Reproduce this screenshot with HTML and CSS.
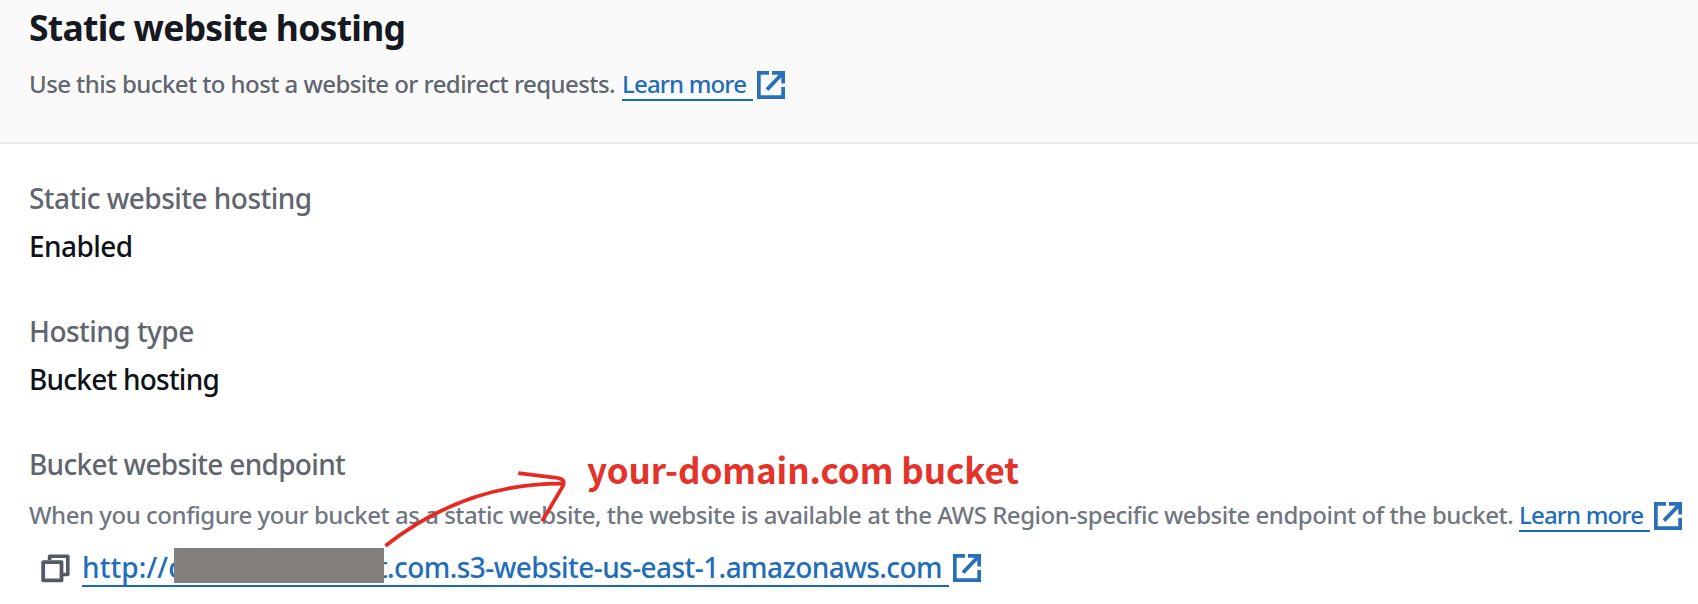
FILE: index.html
```html
<!DOCTYPE html>
<html lang="en">
<head>
<meta charset="utf-8">
<title>Static website hosting</title>
<link rel="stylesheet" href="styles.css">
</head>
<body>
<svg class="defs" aria-hidden="true">
  <symbol id="external" viewBox="0 0 28 28">
    <path d="M12 1.8H1.8v24.4h24.4V16M15 1.8h11.2V12.6M25.2 2.8 10 18.6" fill="none" stroke="currentColor" stroke-width="3.8"/>
  </symbol>
  <symbol id="copy" viewBox="0 0 29 29">
    <path d="M8.6 6V2.3h18.2v18.2H22" fill="none" stroke="currentColor" stroke-width="3.6" stroke-linejoin="round"/>
    <rect x="2.2" y="8.1" width="18.3" height="18.3" fill="#fff" stroke="currentColor" stroke-width="3.8" stroke-linejoin="round"/>
  </symbol>
</svg>
<header class="panel-header">
  <h2 class="title">Static website hosting</h2>
  <p class="hint"><span class="hint-text">Use this bucket to host a website or redirect requests.</span><a class="link">Learn more</a><svg class="icon"><use href="#external"/></svg></p>
</header>
<main class="panel-body">
  <section class="field">
    <div class="label">Static website hosting</div>
    <div class="value enabled">Enabled</div>
  </section>
  <section class="field">
    <div class="label">Hosting type</div>
    <div class="value">Bucket hosting</div>
  </section>
  <section class="field">
    <div class="label endpoint-label">Bucket website endpoint</div>
    <p class="hint endpoint-hint"><span class="hint-text">When you configure your bucket as a static website, the website is available at the AWS Region-specific website endpoint of the bucket.</span><a class="link">Learn more</a><svg class="icon"><use href="#external"/></svg></p>
    <div class="endpoint">
      <svg class="copy"><use href="#copy"/></svg>
      <a class="link url"><span class="url-start">http://c</span><span class="redaction"></span><span class="url-end"><span class="url-tail">t.com.s3-website-us-east-1.amazonaws.com</span></span></a>
      <svg class="icon"><use href="#external"/></svg>
    </div>
  </section>
</main>
<svg class="arrow" viewBox="0 0 190 84">
  <path d="M5.5 80.8C60 38 120 18 183 18.6M138.3 8.2 177 12.8Q186 14 183 21L162 56.3"/>
</svg>
<div class="note">your-domain.com bucket</div>
</body>
</html>
```
FILE: styles.css
```css
* { box-sizing: border-box; }
body {
  margin: 0;
  height: 604px;
  position: relative;
  overflow: hidden;
  background: #fff;
  font-family: "Noto Sans", sans-serif;
  white-space: nowrap;
}
.defs { display: none; }
.panel-header {
  height: 144px;
  padding: 5px 0 0 29px;
  background: #fafafa;
  border-bottom: 2px solid #ececed;
}
.title {
  margin: 0 0 15px;
  font-size: 35.5px;
  line-height: 44px;
  font-weight: 700;
  letter-spacing: -0.75px;
  color: #16191f;
}
.hint {
  display: flex;
  align-items: flex-start;
  margin: 0;
  height: 40px;
  font-size: 24px;
  line-height: 40px;
  font-weight: 500;
  letter-spacing: -0.57px;
  color: #5f666e;
}
.hint-text { width: 593px; flex: none; }
.link {
  flex: none;
  color: #216db9;
  border-bottom: 2px solid #1a69b9;
}
.hint .link {
  width: 131px;
  height: 37px;
  letter-spacing: -0.85px;
}
.icon {
  flex: none;
  width: 28px;
  height: 28px;
  margin: 7px 0 0 4px;
  color: #2a70b9;
}
.panel-body { padding: 30px 0 0 29px; }
.field { height: 133px; }
.label, .value {
  height: 48px;
  font-size: 28px;
  line-height: 49px;
  font-weight: 500;
  letter-spacing: -0.53px;
}
.label { color: #5f666e; }
.value { color: #0f1216; letter-spacing: -0.77px; }
.enabled { letter-spacing: -0.55px; }
.endpoint-label { letter-spacing: -0.69px; margin-bottom: 7px; }
.endpoint-hint { color: #70777f; letter-spacing: -0.473px; }
.endpoint-hint .hint-text { width: 1490px; }
.endpoint-hint .icon { margin-left: 3.5px; }
.endpoint {
  display: flex;
  margin-top: 8px;
  padding-left: 12px;
}
.copy {
  width: 29px;
  height: 29px;
  margin-top: 11px;
  color: #545b64;
}
.url {
  display: flex;
  width: 867px;
  height: 44px;
  margin-left: 12px;
  font-size: 28px;
  line-height: 49px;
  font-weight: 500;
  letter-spacing: -0.57px;
}
.url-start { width: 92px; letter-spacing: 0.1px; }
.redaction {
  position: relative;
  z-index: 1;
  flex: none;
  width: 210px;
  height: 35px;
  margin-top: 5px;
  background: #837f7d;
}
.url-end {
  display: flex;
  justify-content: flex-end;
  width: 558px;
}
.endpoint .icon { margin: 11px 0 0 3.5px; }
.arrow {
  position: absolute;
  z-index: 2;
  left: 380px;
  top: 465px;
  width: 190px;
  height: 84px;
  fill: none;
  stroke: #e62a22;
  stroke-width: 3.8;
}
.note {
  position: absolute;
  left: 587px;
  top: 447px;
  font: 700 35px/44px "Noto Sans CJK SC", sans-serif;
  letter-spacing: -0.05px;
  color: #e3332a;
}
```
